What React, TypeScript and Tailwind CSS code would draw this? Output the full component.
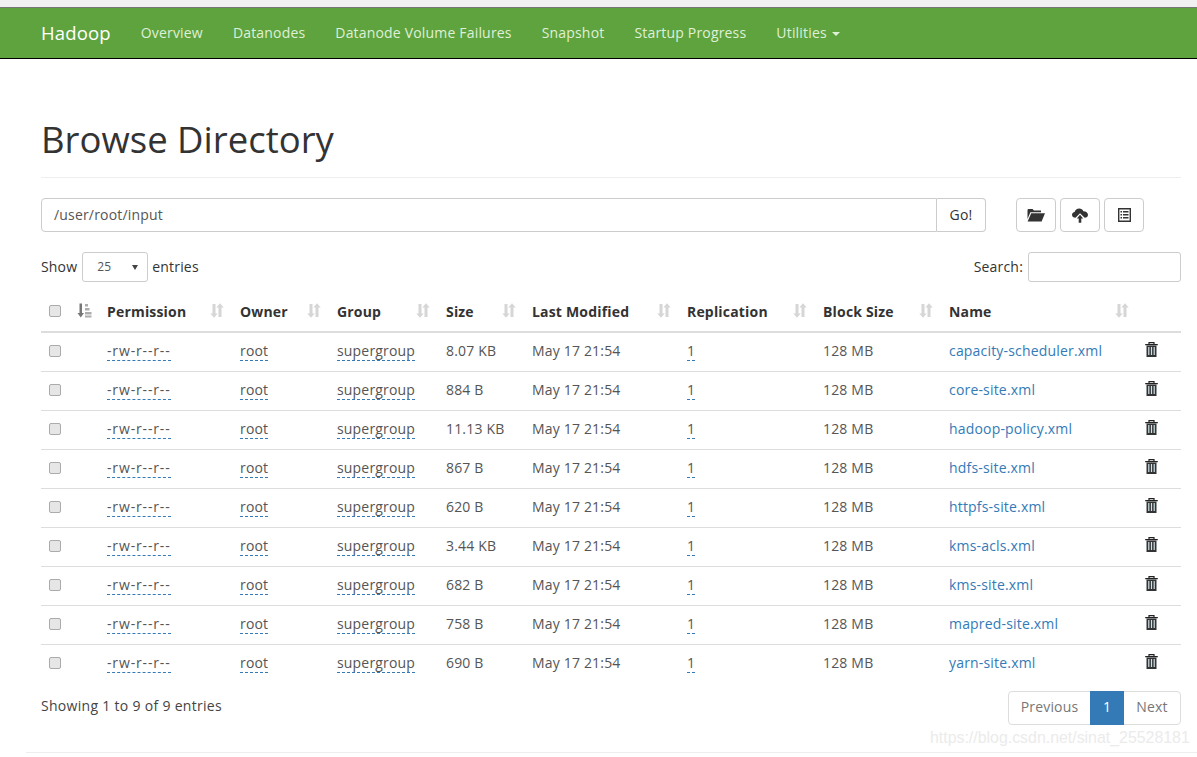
import React from 'react';

const files = [
  ['capacity-scheduler.xml', '8.07 KB'],
  ['core-site.xml', '884 B'],
  ['hadoop-policy.xml', '11.13 KB'],
  ['hdfs-site.xml', '867 B'],
  ['httpfs-site.xml', '620 B'],
  ['kms-acls.xml', '3.44 KB'],
  ['kms-site.xml', '682 B'],
  ['mapred-site.xml', '758 B'],
  ['yarn-site.xml', '690 B'],
];

const navItems = ['Overview', 'Datanodes', 'Datanode Volume Failures', 'Snapshot', 'Startup Progress'];

const columns: [string, string][] = [
  ['Permission', 'w-[133px]'],
  ['Owner', 'w-[97px]'],
  ['Group', 'w-[109px]'],
  ['Size', 'w-[86px]'],
  ['Last Modified', 'w-[155px]'],
  ['Replication', 'w-[136px]'],
  ['Block Size', 'w-[126px]'],
  ['Name', 'w-[196px]'],
];

const SortIcon = () => (
  <svg width="14" height="15" viewBox="0 0 14 15" className="absolute right-[8px] top-[10px] text-[#d6d6d6]" fill="currentColor">
    <path d="M2.500 1h3v9.500h2.200L4 14.800.3 10.500h2.200z" />
    <path d="M10 .2l3.700 4.300h-2.200V14h-3V4.500H6.300z" />
  </svg>
);

const SortedIcon = () => (
  <svg width="15" height="15" viewBox="0 0 15 15" fill="currentColor" className="text-[#777] -mt-[4px]">
    <path d="M2.500 .5h2.500v9.500h2L3.750 14.500.5 10h2z" />
    <path d="M8 1h3v2.500H8zM8 5h4.500v2.500H8zM8 9h6.500v2.500H8zM8 12.500h6.500v2H8z" className="opacity-60" />
  </svg>
);

const TrashIcon = () => (
  <svg width="13" height="15" viewBox="0 0 13 15" fill="none" className="block">
    <path d="M4 2V.7h5V2M.2 2.600h12.600" stroke="#222" strokeWidth="1.200" />
    <path d="M1.500 3.500h10V15h-10z" fill="#333" />
    <path d="M3.200 5h1.200v8H3.200zM5.900 5h1.200v8H5.900zM8.600 5h1.200v8H8.600z" fill="#cfe3ee" />
  </svg>
);

const FolderIcon = () => (
  <svg width="18" height="14" viewBox="0 0 18 14" fill="#333">
    <path d="M0.500 2.200 Q0.500 1 1.700 1H5.500L7 2.500H14V4.200H3.400L0.500 11z" />
    <path d="M4.200 5.200H18L14.600 13.500H0.600z" />
  </svg>
);

const UploadIcon = () => (
  <svg width="16" height="15" viewBox="0 0 16 15" fill="#333">
    <path d="M3.500 9.800C1.400 9.800 0 8.500 0 6.800 0 5.300 1.200 4.200 2.600 4 3.200 1.900 5 .6 7.200 .6c1.900 0 3.500 1 4.200 2.700C14 3.300 16 4.900 16 6.800c0 1.700-1.400 3-3.300 3L8 5.200z" />
    <path d="M8 6.800L11.200 10.400H9.300V14.800H6.700V10.400H4.800z" />
  </svg>
);

const ListIcon = () => (
  <svg width="13" height="14" viewBox="0 0 13 14" fill="none">
    <path d="M.7 .7h11.600v12.600H.7z" stroke="#333" strokeWidth="1.400" />
    <path d="M2.500 3h1.500v1.500H2.500zM5 3h5.500v1.500H5zM2.500 6h1.500v1.500H2.500zM5 6h5.500v1.500H5zM2.500 9h1.500v1.500H2.500zM5 9h5.500v1.500H5z" fill="#333" />
  </svg>
);

const Check = () => (
  <input
    type="checkbox"
    className="appearance-none block w-[12px] h-[12px] rounded-[2px] bg-[#e6e6e6] border border-[#ababab]"
  />
);

const Dashed = ({ children, wide }: { children: React.ReactNode; wide?: boolean }) => (
  <span className={`border-b border-dashed border-[#337ab7] text-[#555] ${wide ? 'tracking-[0.85px]' : ''}`}>{children}</span>
);

export default function App() {
  return (
    <div className="h-[757px] overflow-hidden bg-white text-[14px] leading-[20px] tracking-[0.18px] text-[#333] relative font-['Open_Sans','Noto_Sans',sans-serif]">
      <div className="h-[8px] bg-[#f1f1f1] border-b border-[#777]" />
      <nav className="h-[51px] bg-[#5fa33e] border-b border-black flex items-center pl-[41px] text-[#dff0d8]">
        <a className="text-[18.500px] tracking-[0.15px] text-white mr-[30px]">Hadoop</a>
        <div className="flex gap-[30px]">
          {navItems.map((n) => (
            <a key={n}>{n}</a>
          ))}
          <a className="flex items-center gap-[5px]">
            Utilities
            <span className="w-0 h-0 border-x-[4px] border-x-transparent border-t-[4px] border-t-[#dff0d8] mt-[2px]" />
          </a>
        </div>
      </nav>

      <div className="pl-[41px] pr-[16px]">
        <div className="mt-[60px] pb-[18px] border-b border-[#eeeeee]">
          <h1 className="text-[36.500px] leading-[40px] font-normal tracking-normal">Browse Directory</h1>
        </div>

        <div className="flex mt-[20px] h-[34px]">
          <div className="w-[896px] border border-[#ccc] rounded-l-[4px] px-[12px] flex items-center text-[#555]">
            /user/root/input
          </div>
          <button className="w-[49px] border border-l-0 border-[#ccc] rounded-r-[4px]">Go!</button>
          <div className="flex gap-[4px] ml-[30px]">
            <button className="w-[40px] border border-[#ccc] rounded-[4px] flex items-center justify-center"><FolderIcon /></button>
            <button className="w-[40px] border border-[#ccc] rounded-[4px] flex items-center justify-center"><UploadIcon /></button>
            <button className="w-[40px] border border-[#ccc] rounded-[4px] flex items-center justify-center"><ListIcon /></button>
          </div>
        </div>

        <div className="flex justify-between items-center mt-[20px] h-[30px]">
          <div className="flex items-center gap-[4px]">
            <span className="mr-[1px]">Show</span>
            <div className="w-[66px] h-[30px] border border-[#ccc] rounded-[3px] flex items-center justify-between pl-[14px] pr-[9px] text-[12px] text-[#555]">
              25
              <span className="w-0 h-0 border-x-[3.500px] border-x-transparent border-t-[5px] border-t-[#444]" />
            </div>
            entries
          </div>
          <div className="flex items-center gap-[5px]">
            Search:
            <div className="w-[153px] h-[30px] border border-[#ccc] rounded-[3px]" />
          </div>
        </div>

        <table className="table-fixed w-[1140px] mt-[11px] border-collapse">
          <thead>
            <tr className="h-[39px] border-b-2 border-[#ddd]">
              <th className="w-[28px] pl-[8px] pb-[2px]"><Check /></th>
              <th className="w-[30px] pl-[8px] align-middle"><SortedIcon /></th>
              {columns.map(([c, w]) => (
                <th key={c} className={`${w} relative pl-[8px] text-left font-bold`}>
                  {c}
                  <SortIcon />
                </th>
              ))}
              <th className="w-[44px]" />
            </tr>
          </thead>
          <tbody>
            {files.map(([name, size]) => (
              <tr key={name} className="h-[39px] border-b border-[#ddd] last:border-b-0">
                <td className="pl-[8px] pb-[2px]"><Check /></td>
                <td />
                <td className="pl-[8px] pb-[2px]"><Dashed wide>-rw-r--r--</Dashed></td>
                <td className="pl-[8px] pb-[2px]"><Dashed>root</Dashed></td>
                <td className="pl-[8px] pb-[2px]"><Dashed>supergroup</Dashed></td>
                <td className="pl-[8px] pb-[2px] text-[#555]">{size}</td>
                <td className="pl-[8px] pb-[2px] text-[#555]">May 17 21:54</td>
                <td className="pl-[8px] pb-[2px]"><Dashed>1</Dashed></td>
                <td className="pl-[8px] pb-[2px] text-[#555]">128 MB</td>
                <td className="pl-[8px] pb-[2px] text-[#337ab7] whitespace-nowrap">{name}</td>
                <td className="pl-[8px] pb-[4px]"><TrashIcon /></td>
              </tr>
            ))}
          </tbody>
        </table>

        <div className="flex justify-between items-center mt-[8px] w-[1140px]">
          <div className="text-[#444] tracking-[0.3px] pb-[4px]">Showing 1 to 9 of 9 entries</div>
          <div className="flex h-[34px] border border-[#ddd] rounded-[4px] text-[#777]">
            <span className="w-[81px] pb-[2px] flex items-center justify-center">Previous</span>
            <span className="w-[34px] -my-px pb-[2px] flex items-center justify-center bg-[#337ab7] text-white">1</span>
            <span className="w-[56px] pb-[2px] flex items-center justify-center">Next</span>
          </div>
        </div>
      </div>

      <div className="absolute left-[26px] right-0 top-[752px] border-t border-[#eee]" />
      <div className="absolute left-[930px] top-[728px] text-[#ebebeb] text-[15.900px] tracking-normal font-['Liberation_Sans',sans-serif]">https://blog.csdn.net/sinat_25528181</div>
    </div>
  );
}
